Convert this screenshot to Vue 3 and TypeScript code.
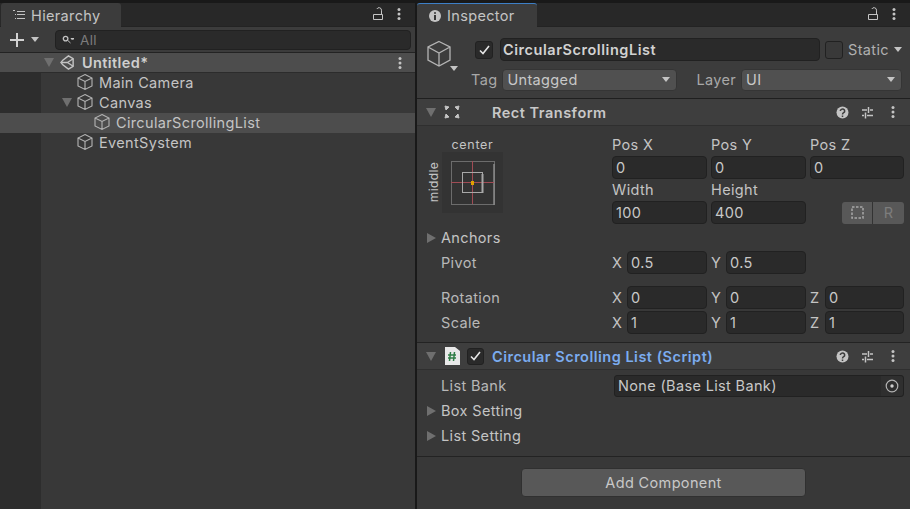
<script setup lang="ts">
const rows = [
  { name: 'Main Camera', depth: 0, open: false, selected: false },
  { name: 'Canvas', depth: 0, open: true, selected: false },
  { name: 'CircularScrollingList', depth: 1, open: false, selected: true },
  { name: 'EventSystem', depth: 0, open: false, selected: false },
]
const posFields = ['Pos X', 'Pos Y', 'Pos Z']
const vectors = [
  { label: 'Pivot', cls: 'pivot-row', axes: [['X', '0.5'], ['Y', '0.5']] },
  { label: 'Rotation', cls: 'rotation-row', axes: [['X', '0'], ['Y', '0'], ['Z', '0']] },
  { label: 'Scale', cls: 'scale-row', axes: [['X', '1'], ['Y', '1'], ['Z', '1']] },
]
</script>

<template>
  <div class="editor">
    <!-- Hierarchy -->
    <section class="panel hierarchy">
      <div class="tabbar">
        <div class="tab">
          <svg width="14" height="12" viewBox="0 0 14 12">
            <path d="M1 1.5h2M5 2.500h8M3 5.500h1M5 5.500h8M3 9.500h1M5 9.500h8" stroke="#c4c4c4" fill="none" />
          </svg>
          <span>Hierarchy</span>
        </div>
        <div class="tab-actions">
          <svg width="11" height="13" viewBox="0 0 11 13">
            <path d="M.5 7.500h9v5h-9zM8.500 7V3.200A2.500 2.500 0 0 0 3.800 2" stroke="#c4c4c4" fill="none" />
          </svg>
          <svg width="4" height="14" viewBox="0 0 4 14">
            <circle cx="2" cy="2.500" r="1.500" fill="#c4c4c4" /><circle cx="2" cy="7" r="1.500" fill="#c4c4c4" /><circle cx="2" cy="11.500" r="1.500" fill="#c4c4c4" />
          </svg>
        </div>
      </div>
      <div class="toolbar">
        <svg width="16" height="16" viewBox="0 0 16 16">
          <path d="M8 1v14M1 8h14" stroke="#d2d2d2" stroke-width="2" fill="none" />
        </svg>
        <i class="tri-down small"></i>
        <div class="search">
          <svg width="12" height="10" viewBox="0 0 12 10">
            <circle cx="3.600" cy="3.600" r="2.300" stroke="#c4c4c4" stroke-width="1.300" fill="none" />
            <path d="M5.500 5.200l3 2.800M9 3.500h3l-1.500 1.500z" stroke="#c4c4c4" fill="none" />
          </svg>
          <span>All</span>
        </div>
      </div>
      <div class="scene-row">
        <i class="tri-down scene-arrow"></i>
        <svg width="15" height="15" viewBox="0 0 16 16">
          <path d="M9 1l5 3v8l-5 3-6-4.500L1 8l2-2.500z" fill="none" stroke="#c4c4c4" stroke-width="1.500" />
          <path d="M8 8l6-4M8 8l6 4M8 8H2" stroke="#c4c4c4" stroke-width="1.500" />
        </svg>
        <b>Untitled*</b>
        <svg class="scene-more" width="4" height="14" viewBox="0 0 4 14">
          <circle cx="2" cy="2.500" r="1.500" fill="#c4c4c4" /><circle cx="2" cy="7" r="1.500" fill="#c4c4c4" /><circle cx="2" cy="11.500" r="1.500" fill="#c4c4c4" />
        </svg>
      </div>
      <div class="tree">
        <div v-for="row in rows" :key="row.name" class="tree-row" :class="{ selected: row.selected }">
          <div class="gutter"></div>
          <div class="tree-cell" :class="{ nested: row.depth > 0 }">
            <i class="tri-down" :class="{ hidden: !row.open }"></i>
            <svg width="18" height="18" viewBox="0 0 18 18">
              <path d="M9 1.500l7 3.500v8l-7 3.500-7-3.500V5zM2 5l7 3.500L16 5M9 8.500v8" fill="none" stroke="#b4b4b4" stroke-width="1.100" />
            </svg>
            <span>{{ row.name }}</span>
          </div>
        </div>
        <div class="tree-rest"><div class="gutter"></div></div>
      </div>
    </section>

    <!-- Inspector -->
    <section class="panel inspector">
      <div class="tabbar">
        <div class="tab active">
          <svg width="12" height="12" viewBox="0 0 12 12">
            <circle cx="6" cy="6" r="6" fill="#c4c4c4" />
            <path d="M6 2.200v1.600M6 5v5" stroke="#282828" stroke-width="1.800" />
          </svg>
          <span>Inspector</span>
        </div>
        <div class="tab-actions">
          <svg width="11" height="13" viewBox="0 0 11 13">
            <path d="M.5 7.500h9v5h-9zM8.500 7V3.200A2.500 2.500 0 0 0 3.800 2" stroke="#c4c4c4" fill="none" />
          </svg>
          <svg width="4" height="14" viewBox="0 0 4 14">
            <circle cx="2" cy="2.500" r="1.500" fill="#c4c4c4" /><circle cx="2" cy="7" r="1.500" fill="#c4c4c4" /><circle cx="2" cy="11.500" r="1.500" fill="#c4c4c4" />
          </svg>
        </div>
      </div>

      <div class="object-head">
        <div class="object-icon">
          <svg width="26" height="28" viewBox="0 0 26 28">
            <path d="M13 1.500l11 5.500v13l-11 6-11-6V7zM2 7l11 6 11-6M13 13v13" fill="none" stroke="#b4b4b4" stroke-width="1.300" />
          </svg>
          <i class="tri-down small object-tri"></i>
        </div>
        <div class="object-fields">
          <div class="object-line">
            <span class="check">
              <svg width="11" height="10" viewBox="0 0 11 10"><path d="M1 5.500l3 3 6-7.500" fill="none" stroke="#e6e6e6" stroke-width="1.600" /></svg>
            </span>
            <div class="name-field">CircularScrollingList</div>
            <span class="check empty"></span>
            <span class="static">Static</span>
            <i class="tri-down small"></i>
          </div>
          <div class="object-line tags">
            <span class="muted">Tag</span>
            <div class="select tag-select">Untagged<i class="tri-down small"></i></div>
            <span class="muted layer-label">Layer</span>
            <div class="select layer-select">UI<i class="tri-down small"></i></div>
          </div>
        </div>
      </div>

      <header class="comp-head">
        <i class="tri-down"></i>
        <svg class="rect-icon" width="16" height="14" viewBox="0 0 16 14">
          <path d="M1 1l4 1-3 3zM15 1l-4 1 3 3zM1 13l4-1-3-3zM15 13l-4-1 3-3z" fill="#c4c4c4" stroke="#c4c4c4" />
        </svg>
        <b class="comp-title">Rect Transform</b>
        <div class="comp-actions">
          <svg width="13" height="13" viewBox="0 0 13 13">
            <circle cx="6.500" cy="6.500" r="6" fill="#c4c4c4" />
            <path d="M4.300 5a2.200 2 0 1 1 3.400 1.700c-.9.600-1.200 1-1.200 1.800M6.500 9.500v1.500" fill="none" stroke="#3e3e3e" stroke-width="1.500" />
          </svg>
          <svg width="13" height="13" viewBox="0 0 13 13">
            <path d="M1 4h5M9 4h3M7.500 1v6M1 9.500h2M6 9.500h6M4.500 6.500v6" fill="none" stroke="#c4c4c4" stroke-width="1.500" />
          </svg>
          <svg class="more" width="4" height="14" viewBox="0 0 4 14">
            <circle cx="2" cy="2.500" r="1.500" fill="#c4c4c4" /><circle cx="2" cy="7" r="1.500" fill="#c4c4c4" /><circle cx="2" cy="11.500" r="1.500" fill="#c4c4c4" />
          </svg>
        </div>
      </header>

      <div class="rect-body">
        <div class="rect-top">
          <div class="anchor">
            <div class="anchor-h">center</div>
            <div class="anchor-main">
              <div class="anchor-v">middle</div>
              <svg width="61" height="61" viewBox="0 0 61 61">
                <rect width="61" height="61" fill="#333333" />
                <rect x="9.500" y="9.500" width="43" height="43" fill="none" stroke="#6c6c6c" />
                <path d="M52 12v41" stroke="#8a8a8a" stroke-width="1.500" />
                <path d="M9 30.500h43M30.500 9v43" stroke="#a14c55" />
                <rect x="20.500" y="20.500" width="20" height="20" fill="none" stroke="#a8a8a8" />
                <path d="M40.500 22v19" stroke="#a8a8a8" stroke-width="2" />
                <rect x="29" y="29" width="3" height="4" fill="#e2a100" />
              </svg>
            </div>
          </div>
          <div class="pos-grid">
            <label v-for="f in posFields" :key="f">{{ f }}</label>
            <div v-for="f in posFields" :key="f + 'v'" class="input">0</div>
            <label>Width</label>
            <label>Height</label>
            <span></span>
            <div class="input">100</div>
            <div class="input">400</div>
            <div class="mini-buttons">
              <div class="mini-btn left">
                <svg width="15" height="15" viewBox="0 0 15 15">
                  <rect x="2" y="2" width="11" height="11" fill="none" stroke="#a8a8a8" stroke-width="1.500" stroke-dasharray="2.500 1.500" />
                </svg>
              </div>
              <div class="mini-btn right">R</div>
            </div>
          </div>
        </div>

        <div class="prop fold"><i class="tri-right"></i><span>Anchors</span></div>
        <div v-for="v in vectors" :key="v.label" class="prop" :class="v.cls">
          <span class="prop-label">{{ v.label }}</span>
          <div class="axes">
            <div v-for="a in v.axes" :key="a[0]" class="axis">
              <span>{{ a[0] }}</span>
              <div class="input">{{ a[1] }}</div>
            </div>
          </div>
        </div>
      </div>

      <header class="comp-head script-head">
        <i class="tri-down"></i>
        <svg class="script-icon" width="15" height="18" viewBox="0 0 15 18">
          <path d="M0 0h10l5 4v14H0z" fill="#e8e8e8" />
          <path d="M5.500 5L4.500 14M9.500 5L8.500 14M3 8h8M3 11h8" stroke="#2f7d46" stroke-width="1.500" fill="none" />
        </svg>
        <span class="check script-check">
          <svg width="11" height="10" viewBox="0 0 11 10"><path d="M1 5.500l3 3 6-7.500" fill="none" stroke="#e6e6e6" stroke-width="1.600" /></svg>
        </span>
        <b class="comp-title script-title">Circular Scrolling List (Script)</b>
        <div class="comp-actions">
          <svg width="13" height="13" viewBox="0 0 13 13">
            <circle cx="6.500" cy="6.500" r="6" fill="#c4c4c4" />
            <path d="M4.300 5a2.200 2 0 1 1 3.400 1.700c-.9.600-1.200 1-1.200 1.800M6.500 9.500v1.500" fill="none" stroke="#3e3e3e" stroke-width="1.500" />
          </svg>
          <svg width="13" height="13" viewBox="0 0 13 13">
            <path d="M1 4h5M9 4h3M7.500 1v6M1 9.500h2M6 9.500h6M4.500 6.500v6" fill="none" stroke="#c4c4c4" stroke-width="1.500" />
          </svg>
          <svg class="more" width="4" height="14" viewBox="0 0 4 14">
            <circle cx="2" cy="2.500" r="1.500" fill="#c4c4c4" /><circle cx="2" cy="7" r="1.500" fill="#c4c4c4" /><circle cx="2" cy="11.500" r="1.500" fill="#c4c4c4" />
          </svg>
        </div>
      </header>

      <div class="script-body">
        <div class="prop">
          <span class="prop-label bank-label">List Bank</span>
          <div class="object-field">
            <span>None (Base List Bank)</span>
            <div class="picker">
              <svg width="14" height="14" viewBox="0 0 14 14">
                <circle cx="7" cy="7" r="5.800" fill="none" stroke="#b4b4b4" stroke-width="1.200" />
                <circle cx="7" cy="7" r="1.700" fill="#d0d0d0" />
              </svg>
            </div>
          </div>
        </div>
        <div class="prop fold"><i class="tri-right"></i><span>Box Setting</span></div>
        <div class="prop fold"><i class="tri-right"></i><span>List Setting</span></div>
      </div>

      <div class="add-area">
        <div class="add-button">Add Component</div>
      </div>
    </section>
  </div>
</template>

<style>
html, body {
  margin: 0;
  background: #191919;
}
</style>

<style scoped>
.editor {
  width: 910px;
  height: 509px;
  padding-top: 3px;
  box-sizing: border-box;
  display: flex;
  background: #191919;
  font-family: Inter, "Liberation Sans", sans-serif;
  font-size: 14.5px;
  letter-spacing: 0.35px;
  color: #c4c4c4;
  overflow: hidden;
}
.panel {
  display: flex;
  flex-direction: column;
  background: #383838;
  height: 506px;
}
.hierarchy {
  width: 415px;
  margin-right: 2px;
}
.inspector {
  width: 493px;
}
.tabbar {
  height: 24px;
  background: #282828;
  display: flex;
  align-items: stretch;
  justify-content: space-between;
  flex: none;
  box-sizing: border-box;
  border-bottom: 1px solid #232323;
}
.tab {
  width: 120px;
  margin-left: 1px;
  background: #3c3c3c;
  border-radius: 3px 3px 0 0;
  display: flex;
  align-items: center;
  gap: 5px;
  padding-left: 11px;
  box-sizing: border-box;
  margin-bottom: -1px;
}
.tab.active {
  margin-left: 0;
  border-top: 1px solid #3d7fc6;
  padding-left: 12px;
  gap: 6px;
}
.tab-actions {
  display: flex;
  align-items: center;
  gap: 13px;
  padding-right: 14px;
  padding-bottom: 2px;
}
.toolbar {
  height: 26px;
  flex: none;
  background: #3c3c3c;
  border-bottom: 1px solid #232323;
  box-sizing: border-box;
  display: flex;
  align-items: center;
  padding-left: 9px;
}
.toolbar .small {
  margin-left: 6px;
}
.search {
  margin-left: 16px;
  width: 356px;
  height: 20px;
  box-sizing: border-box;
  background: #2a2a2a;
  border: 1px solid #212121;
  border-radius: 4px;
  display: flex;
  align-items: center;
  padding-left: 6px;
  gap: 6px;
  color: #7c7c7c;
  font-size: 13.5px;
}
.tri-down {
  display: inline-block;
  width: 0;
  height: 0;
  border-left: 5px solid transparent;
  border-right: 5px solid transparent;
  border-top: 9px solid #6f6f6f;
  flex: none;
}
.tri-down.small {
  border-left-width: 4.5px;
  border-right-width: 4.5px;
  border-top: 5px solid #c4c4c4;
}
.tri-down.hidden {
  visibility: hidden;
}
.tri-right {
  display: inline-block;
  width: 0;
  height: 0;
  border-top: 5px solid transparent;
  border-bottom: 5px solid transparent;
  border-left: 9px solid #6f6f6f;
  flex: none;
}
.scene-row {
  height: 20px;
  flex: none;
  box-sizing: border-box;
  background: #4d4d4d;
  border-bottom: 1px solid #2c2c2c;
  display: flex;
  align-items: center;
  padding-left: 44px;
  gap: 6px;
  color: #cfcfcf;
}
.scene-row b {
  margin-left: 1px;
  font-weight: 600;
  letter-spacing: 0.4px;
}
.scene-more {
  margin-left: auto;
  margin-right: 13px;
}
.tree {
  flex: 1;
  display: flex;
  flex-direction: column;
}
.tree-row {
  height: 20px;
  display: flex;
  flex: none;
}
.tree-row.selected,
.tree-row.selected .gutter {
  background: #4d4d4d;
}
.gutter {
  width: 41px;
  background: #2d2d2d;
  flex: none;
}
.tree-rest {
  flex: 1;
  display: flex;
}
.tree-cell {
  display: flex;
  align-items: center;
  padding-left: 21px;
  padding-bottom: 2px;
  height: 20px;
  box-sizing: border-box;
  gap: 5px;
}
.tree-cell .tri-down {
  margin-right: -1px;
}
.tree-cell.nested {
  padding-left: 38px;
}
.object-head {
  height: 72px;
  flex: none;
  box-sizing: border-box;
  background: #3c3c3c;
  border-bottom: 1px solid #1f1f1f;
  display: flex;
  padding: 10px 0 0 9px;
}
.object-icon {
  width: 40px;
  flex: none;
  position: relative;
  padding-top: 3px;
}
.object-tri {
  position: absolute;
  left: 24px;
  top: 29px;
}
.object-fields {
  flex: 1;
  display: flex;
  flex-direction: column;
}
.object-line {
  display: flex;
  align-items: center;
  height: 25px;
}
.check {
  width: 18px;
  height: 18px;
  box-sizing: border-box;
  background: #2a2a2a;
  border: 1px solid #212121;
  border-radius: 3px;
  display: flex;
  align-items: center;
  justify-content: center;
  flex: none;
  margin-left: 9px;
}
.name-field {
  width: 320px;
  height: 23px;
  margin-left: 7px;
  box-sizing: border-box;
  background: #2a2a2a;
  border: 1px solid #212121;
  border-radius: 4px;
  display: flex;
  align-items: center;
  padding-left: 2px;
  font-weight: 600;
  letter-spacing: 0.55px;
  color: #d2d2d2;
}
.check.empty {
  margin-left: 5px;
  background: #393939;
}
.static {
  margin: 0 5px 0 5px;
  color: #b0b0b0;
}
.tags {
  margin-top: 5px;
}
.muted {
  color: #a8a8a8;
}
.tags > .muted:first-child {
  margin-left: 5px;
}
.select {
  height: 22px;
  box-sizing: border-box;
  background: #505050;
  border: 1px solid #353535;
  border-radius: 4px;
  display: flex;
  align-items: center;
  justify-content: space-between;
  padding: 0 6px 0 4px;
  color: #c8c8c8;
}
.tag-select {
  width: 175px;
  margin-left: 5px;
}
.layer-label {
  margin-left: 19px;
}
.layer-select {
  width: 161px;
  margin-left: 5px;
}
.comp-head {
  height: 27px;
  flex: none;
  box-sizing: border-box;
  background: #3e3e3e;
  border-bottom: 1px solid #2f2f2f;
  display: flex;
  align-items: center;
  padding-left: 9px;
}
.comp-title {
  font-weight: 600;
  letter-spacing: 0.5px;
  color: #c8c8c8;
}
.rect-icon {
  margin-left: 8px;
  margin-right: 32px;
}
.comp-actions {
  margin-left: auto;
  padding-right: 15px;
  display: flex;
  align-items: center;
  gap: 12px;
}
.comp-actions .more {
  margin-left: 5px;
}
.rect-body {
  height: 217px;
  flex: none;
  box-sizing: border-box;
  border-bottom: 1px solid #232323;
}
.rect-top {
  display: flex;
  height: 99px;
}
.anchor {
  width: 195px;
  padding-left: 11px;
  box-sizing: border-box;
  flex: none;
}
.anchor-h {
  height: 26px;
  margin-left: 14px;
  width: 61px;
  line-height: 37px;
  font-size: 12.5px;
  letter-spacing: 0.7px;
  text-align: center;
}
.anchor-main {
  display: flex;
  align-items: center;
  gap: 2px;
}
.anchor-v {
  writing-mode: vertical-rl;
  transform: rotate(180deg);
  font-size: 12px;
  width: 12px;
  text-align: center;
  line-height: 12px;
}
.pos-grid {
  display: grid;
  grid-template-columns: 95px 95px 94px;
  grid-template-rows: 22px 23px 22px 23px;
  column-gap: 4px;
  padding-top: 8px;
}
.pos-grid label {
  line-height: 22px;
}
.input {
  height: 23px;
  box-sizing: border-box;
  background: #2a2a2a;
  border: 1px solid #212121;
  border-radius: 4px;
  display: flex;
  align-items: center;
  padding-left: 3px;
  color: #c8c8c8;
}
.mini-buttons {
  display: flex;
  justify-content: flex-end;
  align-items: center;
}
.mini-btn {
  width: 31px;
  height: 22px;
  background: #585858;
  display: flex;
  align-items: center;
  justify-content: center;
  box-sizing: border-box;
  border-right: 1px solid #333;
  color: #7d7d7d;
}
.mini-btn.left {
  border-radius: 3px 0 0 3px;
}
.mini-btn.right {
  border-radius: 0 3px 3px 0;
  border-right: 0;
}
.prop {
  display: flex;
  align-items: center;
  height: 25px;
  padding-left: 24px;
}
.fold {
  padding-left: 10px;
  gap: 5px;
}
.rotation-row {
  margin-top: 10px;
}
.prop-label {
  width: 171px;
  flex: none;
  color: #b8b8b8;
}
.bank-label {
  width: 173px;
}
.axes {
  display: grid;
  grid-template-columns: 95px 95px 94px;
  column-gap: 4px;
}
.axis {
  display: flex;
  align-items: center;
}
.axis span {
  width: 15px;
  flex: none;
}
.axis .input {
  flex: 1;
}
.script-icon {
  margin-left: 9px;
}
.script-check {
  margin-left: 7px;
  margin-right: 8px;
  width: 17px;
  height: 17px;
}
.script-title {
  color: #7bacf0;
}
.script-body {
  height: 87px;
  flex: none;
  box-sizing: border-box;
  border-bottom: 1px solid #232323;
  padding-top: 3px;
}
.object-field {
  width: 290px;
  height: 22px;
  box-sizing: border-box;
  background: #2a2a2a;
  border: 1px solid #212121;
  border-radius: 3px;
  display: flex;
  align-items: center;
  justify-content: space-between;
  padding-left: 3px;
  color: #c8c8c8;
}
.picker {
  width: 22px;
  height: 20px;
  background: #2f2f2f;
  display: flex;
  align-items: center;
  justify-content: center;
  border-radius: 0 3px 3px 0;
}
.add-area {
  flex: 1;
  display: flex;
  padding: 11px 0 0 104px;
}
.add-button {
  width: 285px;
  height: 29px;
  box-sizing: border-box;
  background: #585858;
  border: 1px solid #303030;
  border-radius: 4px;
  display: flex;
  align-items: center;
  justify-content: center;
  color: #c8c8c8;
}
</style>
